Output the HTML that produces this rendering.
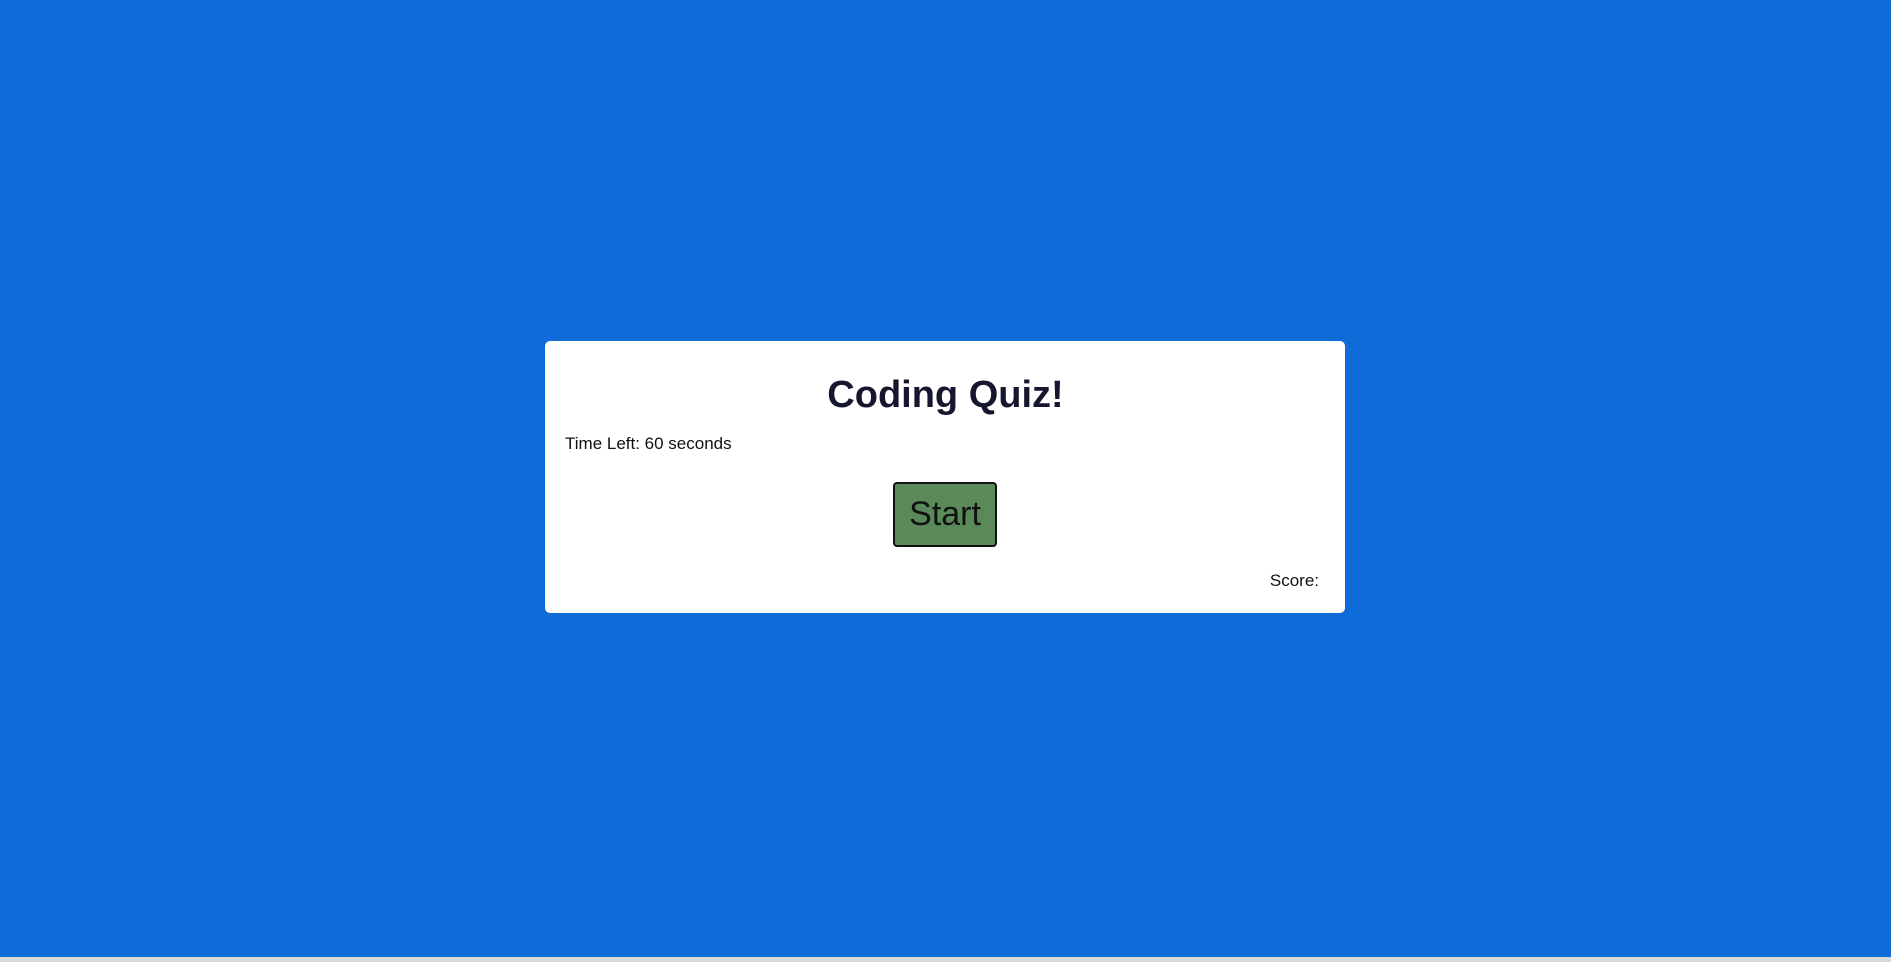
<!DOCTYPE html>
<html><head><meta charset="utf-8"><style>
html,body{margin:0;padding:0;}
body{width:1891px;height:962px;background:#0f6bd8;position:relative;overflow:hidden;font-family:"Liberation Sans",sans-serif;}
.bar{position:absolute;left:0;top:957px;width:1891px;height:5px;background:#d9d9d9;}
.card{position:absolute;left:545px;top:341px;width:800px;height:272px;background:#fff;border-radius:5px;}
h1{position:absolute;left:0;width:100%;top:373px;margin:0;text-align:center;font-size:38px;font-weight:bold;color:#16162e;line-height:44px;}
.t{position:absolute;left:565px;top:434px;font-size:17px;color:#111;line-height:20px;}
.btn{position:absolute;left:893px;top:482px;width:100px;height:61px;background:#5a8a5a;border:2px solid #111;border-radius:4px;font-size:34px;line-height:61px;text-align:center;color:#111;}
.s{position:absolute;right:572px;top:571px;font-size:17px;color:#111;line-height:20px;}
</style></head><body>
<div class="card"></div>
<h1>Coding Quiz!</h1>
<div class="t">Time Left: 60 seconds</div>
<div class="btn">Start</div>
<div class="s">Score:</div>
<div class="bar"></div>
</body></html>
